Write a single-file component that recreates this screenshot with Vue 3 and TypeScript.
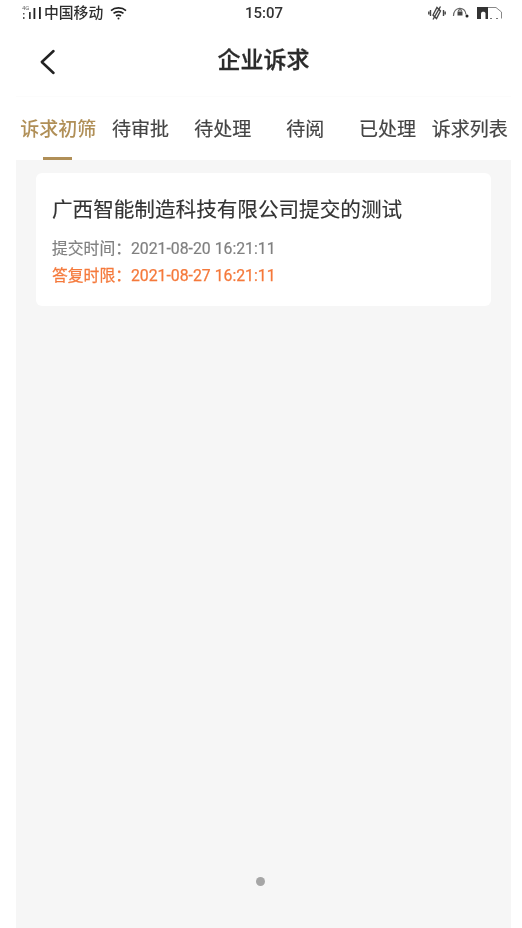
<script setup lang="ts">
const tabs: string[] = ['诉求初筛', '待审批', '待处理', '待阅', '已处理', '诉求列表']
const activeTab = 0
</script>

<template>
  <div class="page">
    <div class="status">
      <div class="status-left">
        <svg class="sig" width="22" height="18" viewBox="0 0 22 18">
          <text x="0" y="6" class="tiny">4G</text>
          <rect x="1" y="9" width="1.5" height="1.5" fill="#555" />
          <rect x="1" y="13" width="1.5" height="2" fill="#555" />
          <rect x="7" y="8" width="1.7" height="7" fill="#333" />
          <rect x="11.5" y="4" width="1.8" height="11" fill="#222" />
          <rect x="17" y="3" width="1.8" height="12" fill="#222" />
        </svg>
        <span class="carrier">中国移动</span>
        <svg class="wifi" width="17" height="14" viewBox="0 0 17 14" fill="none" stroke="#222" stroke-width="1.6">
          <path d="M1 4.6C5 1 12 1 16 4.6" />
          <path d="M3.5 7.4C6.3 5 10.7 5 13.5 7.4" />
          <path d="M6 10C7.5 8.9 9.5 8.9 11 10" />
          <circle cx="8.5" cy="12.4" r="1" fill="#222" stroke="none" />
        </svg>
      </div>
      <span class="time">15:07</span>
      <div class="status-right">
        <svg width="18" height="16" viewBox="0 0 18 16" fill="none" stroke="#444" stroke-width="1.4">
          <path d="M9 2.5l3.5 3.5-4 7.5-3.5-3.500z" />
          <path d="M2.5 5v6M0.8 6.5v3M15.5 5v6M17.2 6.5v3" />
          <path d="M12.5 1.5L5 14.5" />
        </svg>
        <svg width="18" height="16" viewBox="0 0 18 16" fill="none" stroke="#666" stroke-width="1.2">
          <path d="M1.5 11C1.5 1 13.5 1 14 9.5" />
          <rect x="5.5" y="6.5" width="5" height="4" fill="#444" stroke="none" />
          <path d="M6.4 6.5C6.4 4 9.6 4 9.6 6.5" />
          <circle cx="15" cy="11" r="1.5" fill="#222" stroke="none" />
        </svg>
        <svg width="27" height="14" viewBox="0 0 27 14" fill="none">
          <path d="M2 1.5H20L25.5 6V12.5" stroke="#888" stroke-width="1" />
          <path d="M1 1H12V13H1z" fill="#333" />
          <path d="M5 13V7.5C5 5 9.5 5 9.5 7.5V13z" fill="#fff" />
          <path d="M14 12.5H16M20 12.5H22" stroke="#777" stroke-width="1" />
        </svg>
      </div>
    </div>

    <header class="nav">
      <svg class="back" width="17" height="26" viewBox="0 0 17 26" fill="none" stroke="#222" stroke-width="2.5" stroke-linecap="round" stroke-linejoin="round">
        <path d="M14.5 2L2.8 13l11.7 11" />
      </svg>
      <h1 class="title">企业诉求</h1>
    </header>

    <nav class="tabs">
      <div v-for="(t, i) in tabs" :key="t" class="tab" :class="{ active: i === activeTab }">
        <span>{{ t }}</span>
        <i v-if="i === activeTab" class="bar"></i>
      </div>
    </nav>

    <main class="content">
      <article class="card">
        <h2 class="card-title">广西智能制造科技有限公司提交的测试</h2>
        <p class="meta">提交时间：2021-08-20 16:21:11</p>
        <p class="meta due">答复时限：2021-08-27 16:21:11</p>
      </article>
      <div class="dot"></div>
    </main>
  </div>
</template>

<style scoped>
.page {
  width: 522px;
  height: 928px;
  display: flex;
  flex-direction: column;
  background: #fff;
  overflow: hidden;
  font-family: Roboto, "Noto Sans CJK SC", sans-serif;
  color: #333;
  filter: blur(0.4px);
}
.status {
  height: 24px;
  flex: none;
  display: grid;
  grid-template-columns: 1fr auto 1fr;
  align-items: center;
  padding: 1px 19px 0 22px;
  box-sizing: border-box;
}
.status-left {
  display: flex;
  align-items: center;
}
.sig {
  flex: none;
}
.tiny {
  font-size: 6px;
  fill: #666;
}
.carrier {
  font-size: 14.8px;
  line-height: 24px;
  color: #2e2e2e;
  font-weight: 500;
  white-space: nowrap;
}
.wifi {
  margin-left: 7px;
}
.time {
  font-size: 15px;
  font-weight: 500;
  color: #333;
  margin-left: 3px;
}
.status-right {
  display: flex;
  align-items: center;
  justify-content: flex-end;
  gap: 6px;
}
.nav {
  height: 72px;
  flex: none;
  margin: 0 11px 0 16px;
  border-bottom: 1px solid #fcfcfc;
  display: grid;
  grid-template-columns: 1fr auto 1fr;
  align-items: center;
}
.back {
  margin-left: 23px;
  margin-top: 3px;
}
.title {
  grid-column: 2;
  margin: 2px 0 0;
  font-size: 23px;
  line-height: 30px;
  font-weight: 500;
  -webkit-text-stroke: 0.3px #2b2b2b;
  color: #2b2b2b;
}
.tabs {
  height: 63px;
  flex: none;
  margin: 0 11px 0 17px;
  display: grid;
  grid-template-columns: repeat(6, 1fr);
}
.tab {
  position: relative;
  display: flex;
  justify-content: center;
  padding-top: 20px;
  font-size: 19px;
  line-height: 26px;
  font-weight: 400;
  -webkit-text-stroke: 0.2px #444;
  color: #444;
  white-space: nowrap;
}
.tab.active {
  color: #b08f57;
  font-weight: 500;
  -webkit-text-stroke: 0;
}
.bar {
  position: absolute;
  left: 26px;
  bottom: 0;
  width: 29px;
  height: 3px;
  background: #b08f57;
}
.content {
  flex: 1;
  margin: 0 11px 0 16px;
  background: #f6f6f6;
  padding: 13px 20px 0;
  display: flex;
  flex-direction: column;
}
.card {
  height: 133px;
  box-sizing: border-box;
  background: #fff;
  border-radius: 6px;
  padding: 21px 16px 0;
}
.card-title {
  margin: 1px 0 10px;
  font-size: 20.6px;
  line-height: 30px;
  font-weight: 400;
  -webkit-text-stroke: 0.15px #333;
  color: #333;
  white-space: nowrap;
}
.meta {
  margin: -0.25px 0 0;
  font-size: 15.8px;
  line-height: 27.5px;
  font-weight: 400;
  -webkit-text-stroke: 0.2px #808080;
  color: #808080;
  white-space: nowrap;
}
.due {
  color: #f5793b;
  -webkit-text-stroke: 0.25px #f5793b;
}
.dot {
  width: 9px;
  height: 9px;
  border-radius: 50%;
  background: #a6a6a6;
  align-self: center;
  margin-top: 571px;
  margin-left: -7px;
}
</style>
